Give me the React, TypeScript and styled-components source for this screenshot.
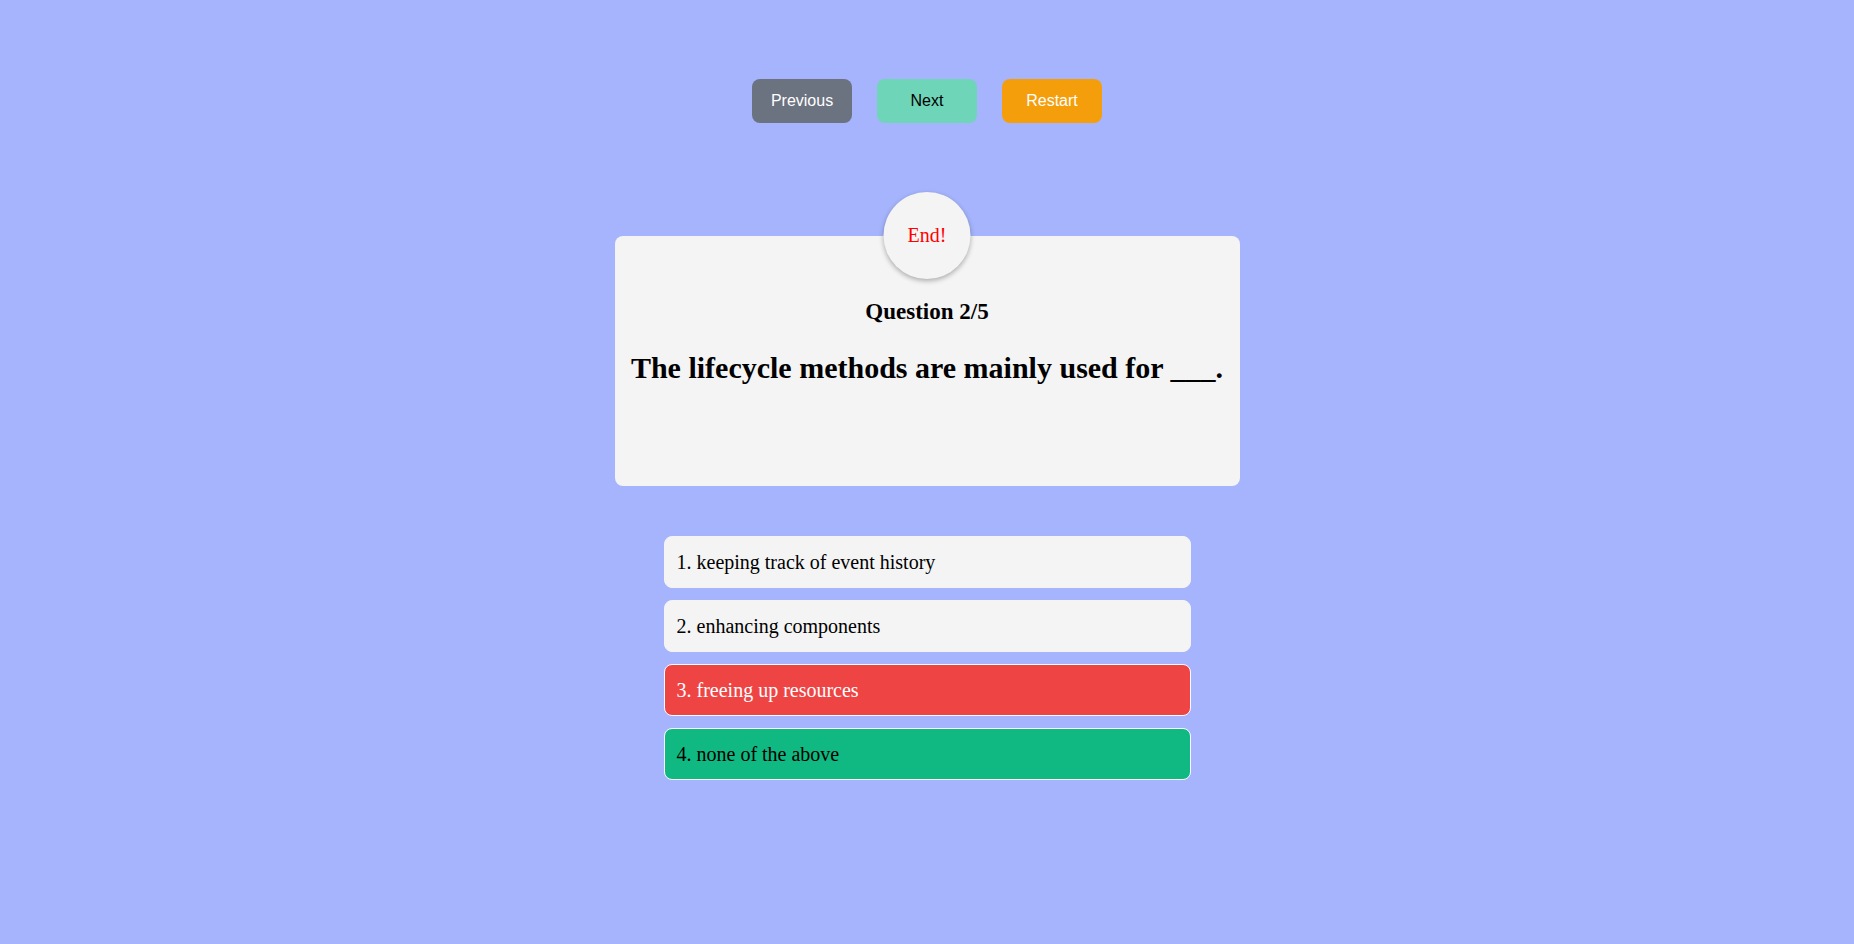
import React from 'react';
import styled, { createGlobalStyle } from 'styled-components';

type Status = 'idle' | 'wrong' | 'correct';

interface Option {
  text: string;
  status: Status;
}

const options: Option[] = [
  { text: 'keeping track of event history', status: 'idle' },
  { text: 'enhancing components', status: 'idle' },
  { text: 'freeing up resources', status: 'wrong' },
  { text: 'none of the above', status: 'correct' },
];

const GlobalStyle = createGlobalStyle`
  html, body {
    margin: 0;
    padding: 0;
    background-color: #a5b4fc;
  }
  body {
    font-family: "Liberation Serif", "Times New Roman", serif;
  }
`;

const Page = styled.div`
  min-height: 944px;
  display: flex;
  flex-direction: column;
  align-items: center;
  padding-top: 79px;
  box-sizing: border-box;
`;

const Controls = styled.div`
  display: flex;
  gap: 25px;
`;

const ControlButton = styled.button<{ bg: string; fg: string }>`
  width: 100px;
  height: 44px;
  border: none;
  border-radius: 8px;
  background-color: ${props => props.bg};
  color: ${props => props.fg};
  font-family: "Liberation Sans", Arial, sans-serif;
  font-size: 16px;
  cursor: pointer;
`;

const Card = styled.div`
  position: relative;
  margin-top: 113px;
  width: 625px;
  height: 250px;
  background-color: #f4f4f4;
  border-radius: 8px;
  padding: 64px 10px 0;
  box-sizing: border-box;
  text-align: center;
`;

const Timer = styled.div`
  position: absolute;
  top: -44px;
  left: 50%;
  transform: translateX(-50%);
  width: 87px;
  height: 87px;
  border-radius: 50%;
  background-color: #f4f4f4;
  box-shadow: 0 2px 5px rgba(0, 0, 0, 0.3);
  display: flex;
  align-items: center;
  justify-content: center;
  color: #ff0000;
  font-size: 20px;
`;

const Counter = styled.h2`
  margin: 0;
  font-size: 23px;
  line-height: 24px;
  font-weight: bold;
  color: #000;
`;

const QuestionText = styled.h1`
  margin: 27px 0 0;
  font-size: 30px;
  line-height: 34px;
  font-weight: bold;
  color: #000;
  white-space: nowrap;
`;

const OptionList = styled.div`
  margin-top: 50px;
  display: flex;
  flex-direction: column;
  gap: 12px;
`;

const OptionRow = styled.div<{ status: Status }>`
  width: 527px;
  height: 52px;
  box-sizing: border-box;
  display: flex;
  align-items: center;
  padding: 0 12px;
  border-radius: 8px;
  font-size: 20px;
  border: 1px solid ${props => (props.status === 'idle' ? '#f4f4f4' : '#ffffff')};
  background-color: ${props =>
    props.status === 'wrong' ? '#ef4444' :
    props.status === 'correct' ? '#10b981' : '#f4f4f4'};
  color: ${props => (props.status === 'wrong' ? '#ffffff' : '#000000')};
  cursor: pointer;
`;

export default function App() {
  return (
    <>
      <GlobalStyle />
      <Page>
        <Controls>
          <ControlButton bg="#6b7280" fg="#ffffff">Previous</ControlButton>
          <ControlButton bg="#6fd5b8" fg="#000000">Next</ControlButton>
          <ControlButton bg="#f59e0b" fg="#ffffff">Restart</ControlButton>
        </Controls>
        <Card>
          <Timer>End!</Timer>
          <Counter>Question 2/5</Counter>
          <QuestionText>The lifecycle methods are mainly used for ___.</QuestionText>
        </Card>
        <OptionList>
          {options.map((opt, i) => (
            <OptionRow key={i} status={opt.status}>
              {i + 1}. {opt.text}
            </OptionRow>
          ))}
        </OptionList>
      </Page>
    </>
  );
}
